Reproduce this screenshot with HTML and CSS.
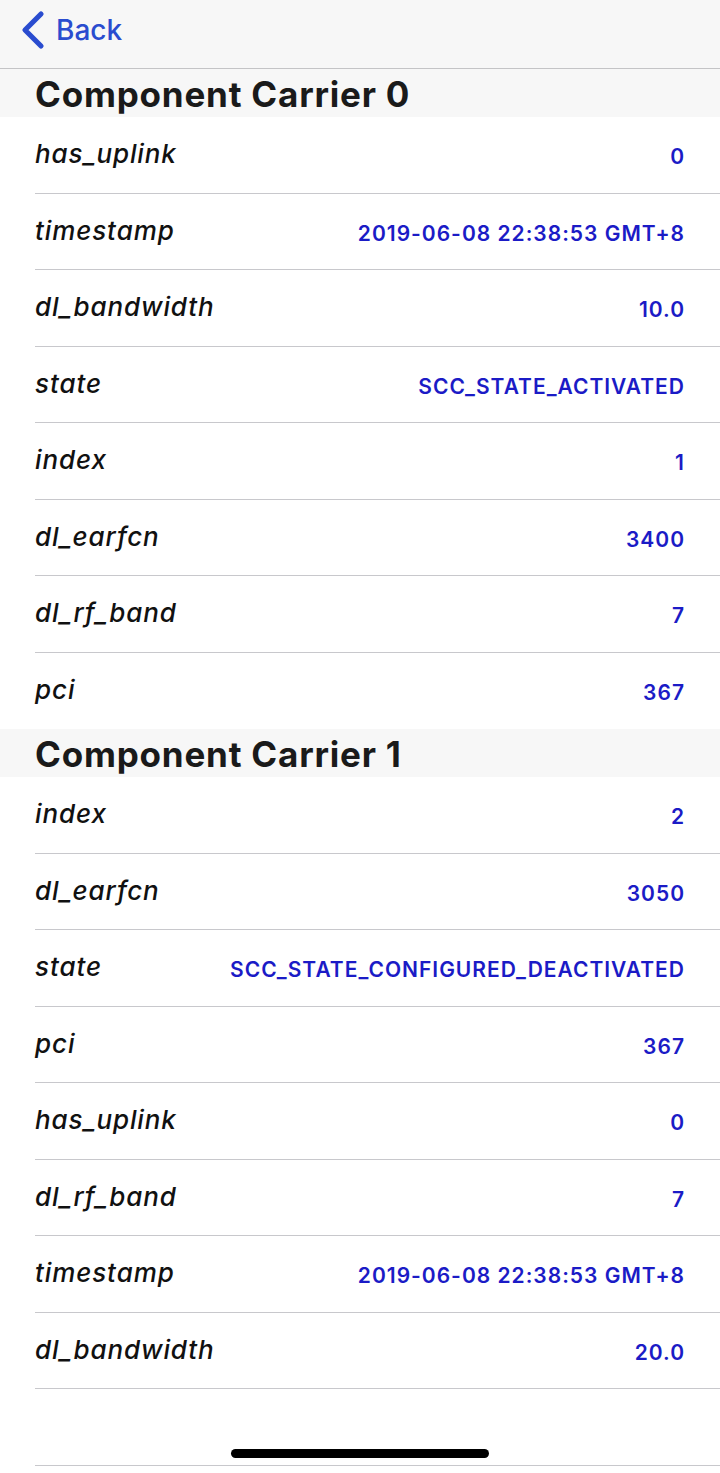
FILE: index.html
```html
<!DOCTYPE html>
<html>
<head>
<meta charset="utf-8">
<link rel="stylesheet" href="styles.css">
</head>
<body>
<div class="screen">
  <nav class="navbar">
    <a class="back">
      <svg class="chev" width="26" height="40" viewBox="0 0 26 40"><path d="M21 4 L5 20 L21 36" fill="none" stroke="#2a4ccf" stroke-width="5.2" stroke-linecap="round" stroke-linejoin="round"/></svg>
      <span>Back</span>
    </a>
  </nav>

  <section>
    <h2 class="sec-head">Component Carrier 0</h2>
    <div class="row"><span class="key">has_uplink</span><span class="val">0</span></div>
    <div class="row"><span class="key">timestamp</span><span class="val">2019-06-08 22:38:53 GMT+8</span></div>
    <div class="row"><span class="key">dl_bandwidth</span><span class="val">10.0</span></div>
    <div class="row"><span class="key">state</span><span class="val">SCC_STATE_ACTIVATED</span></div>
    <div class="row"><span class="key">index</span><span class="val">1</span></div>
    <div class="row"><span class="key">dl_earfcn</span><span class="val">3400</span></div>
    <div class="row"><span class="key">dl_rf_band</span><span class="val">7</span></div>
    <div class="row last"><span class="key">pci</span><span class="val">367</span></div>
  </section>

  <section>
    <h2 class="sec-head">Component Carrier 1</h2>
    <div class="row"><span class="key">index</span><span class="val">2</span></div>
    <div class="row"><span class="key">dl_earfcn</span><span class="val">3050</span></div>
    <div class="row"><span class="key">state</span><span class="val">SCC_STATE_CONFIGURED_DEACTIVATED</span></div>
    <div class="row"><span class="key">pci</span><span class="val">367</span></div>
    <div class="row"><span class="key">has_uplink</span><span class="val">0</span></div>
    <div class="row"><span class="key">dl_rf_band</span><span class="val">7</span></div>
    <div class="row"><span class="key">timestamp</span><span class="val">2019-06-08 22:38:53 GMT+8</span></div>
    <div class="row"><span class="key">dl_bandwidth</span><span class="val">20.0</span></div>
    <div class="row empty"></div>
  </section>

  <div class="home-indicator"></div>
</div>
</body>
</html>
```

FILE: styles.css
```css
* { box-sizing: border-box; margin: 0; padding: 0; }
html, body { background: #fff; }
body {
  font-family: Inter, "Liberation Sans", sans-serif;
  width: 720px;
  height: 1473px;
  overflow: hidden;
}
.screen { position: relative; width: 720px; height: 1473px; }

.navbar {
  height: 69px;
  background: #f7f7f7;
  border-bottom: 1px solid #c4c4c6;
  display: flex;
  align-items: center;
  padding-left: 20px;
}
.back {
  display: flex;
  align-items: center;
  gap: 10px;
  color: #2a4ccf;
  font-size: 28px;
  font-weight: 500;
  margin-top: -8px;
}
.chev { display: block; }

.sec-head {
  height: 48px;
  background: #f7f7f7;
  font-size: 35px;
  font-weight: 700;
  color: #1a1a1a;
  padding-left: 35px;
  line-height: 50px;
  letter-spacing: 0.8px;
}

.row {
  height: 76.5px;
  margin-left: 35px;
  padding-right: 36px;
  border-bottom: 1px solid #c8c8cc;
  display: flex;
  align-items: center;
  justify-content: space-between;
}
.row.last { border-bottom: none; }
.key {
  font-style: italic;
  font-size: 26px;
  font-weight: 500;
  letter-spacing: 0.9px;
  color: #111;
  margin-top: -2px;
}
.val {
  font-size: 21px;
  font-weight: 600;
  letter-spacing: 1px;
  color: #1b1bc6;
  margin-top: 4px;
  margin-right: -1px;
}

.home-indicator {
  position: absolute;
  left: 231px;
  top: 1449px;
  width: 258px;
  height: 9px;
  border-radius: 5px;
  background: #000;
}
```
